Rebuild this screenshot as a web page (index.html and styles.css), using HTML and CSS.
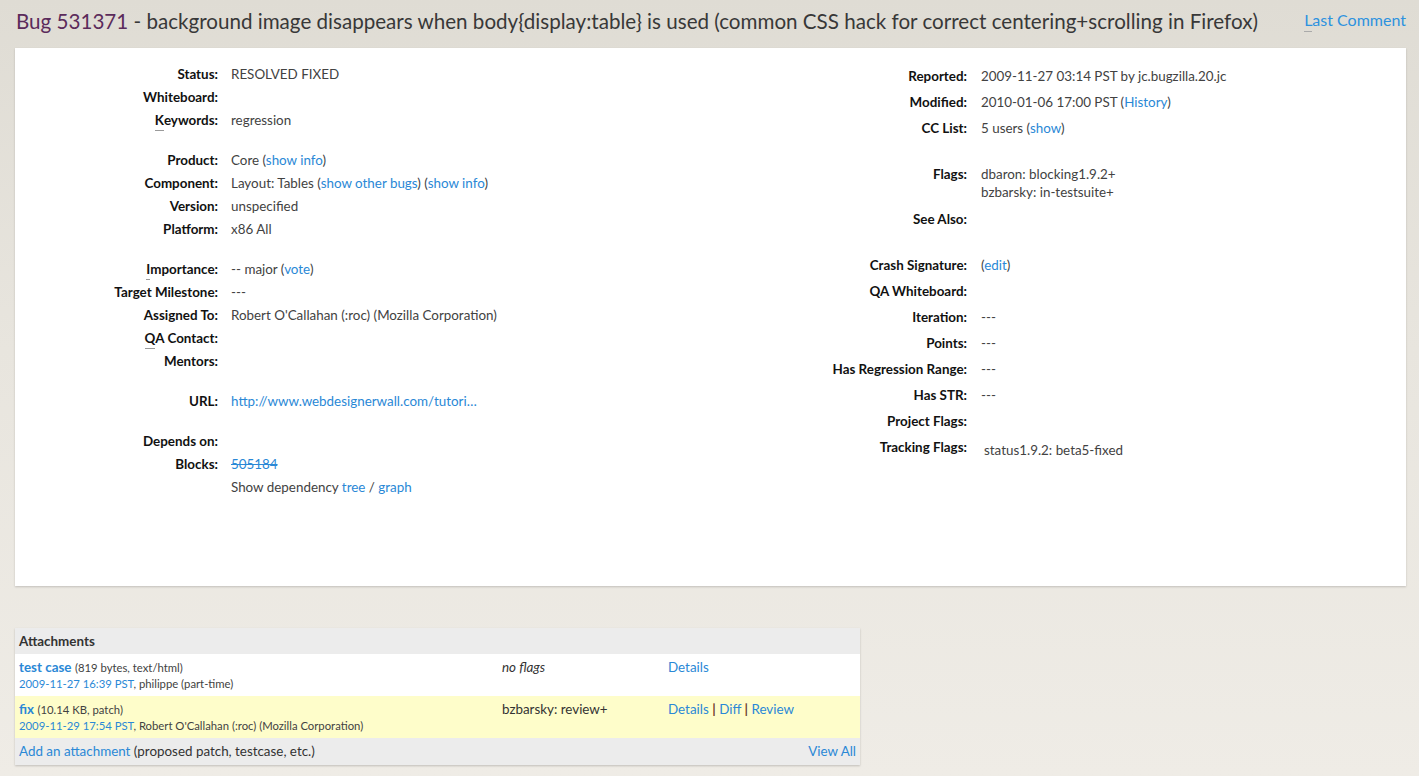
FILE: index.html
```html
<!DOCTYPE html>
<html>
<head>
<meta charset="utf-8">
<title>Bug 531371</title>
<link rel="stylesheet" href="styles.css">
</head>
<body>
<header class="title-bar">
  <h1 class="title"><a class="bug-id" href="#">Bug 531371</a> - background image disappears when body{display:table} is used (common CSS hack for correct centering+scrolling in Firefox)</h1>
  <a class="last-comment" href="#"><span class="k">L</span>ast Comment</a>
</header>

<section class="panel">
  <div class="col col-left">
    <div class="row"><div class="lbl">Status:</div><div class="val">RESOLVED FIXED</div></div>
    <div class="row"><div class="lbl">Whiteboard:</div><div class="val"></div></div>
    <div class="row"><div class="lbl"><span class="k">K</span>eywords:</div><div class="val">regression</div></div>
    <div class="spacer"></div>
    <div class="row"><div class="lbl">Product:</div><div class="val">Core (<a href="#">show info</a>)</div></div>
    <div class="row"><div class="lbl">Component:</div><div class="val">Layout: Tables (<a href="#">show other bugs</a>) (<a href="#">show info</a>)</div></div>
    <div class="row"><div class="lbl">Version:</div><div class="val">unspecified</div></div>
    <div class="row"><div class="lbl">Platform:</div><div class="val">x86 All</div></div>
    <div class="spacer"></div>
    <div class="row"><div class="lbl"><span class="k">I</span>mportance:</div><div class="val">-- major (<a href="#">vote</a>)</div></div>
    <div class="row"><div class="lbl">Target Milestone:</div><div class="val">---</div></div>
    <div class="row"><div class="lbl">Assigned To:</div><div class="val">Robert O'Callahan (:roc) (Mozilla Corporation)</div></div>
    <div class="row"><div class="lbl"><span class="k">Q</span>A Contact:</div><div class="val"></div></div>
    <div class="row"><div class="lbl">Mentors:</div><div class="val"></div></div>
    <div class="spacer"></div>
    <div class="row"><div class="lbl">URL:</div><div class="val"><a href="#">http://www.webdesignerwall.com/tutori…</a></div></div>
    <div class="spacer"></div>
    <div class="row"><div class="lbl">Depends on:</div><div class="val"></div></div>
    <div class="row"><div class="lbl">Blocks:</div><div class="val"><a class="closed" href="#">505184</a></div></div>
    <div class="row"><div class="lbl"></div><div class="val">Show dependency <a href="#">tree</a> / <a href="#">graph</a></div></div>
  </div>

  <div class="col col-right">
    <div class="row"><div class="lbl">Reported:</div><div class="val">2009-11-27 03:14 PST by jc.bugzilla.20.jc</div></div>
    <div class="row"><div class="lbl">Modified:</div><div class="val">2010-01-06 17:00 PST (<a href="#">History</a>)</div></div>
    <div class="row"><div class="lbl">CC List:</div><div class="val">5 users (<a href="#">show</a>)</div></div>
    <div class="spacer"></div>
    <div class="row row-flags"><div class="lbl">Flags:</div><div class="val">dbaron: blocking1.9.2+<br>bzbarsky: in-testsuite+</div></div>
    <div class="row"><div class="lbl">See Also:</div><div class="val"></div></div>
    <div class="spacer"></div>
    <div class="row"><div class="lbl">Crash Signature:</div><div class="val">(<a href="#">edit</a>)</div></div>
    <div class="row"><div class="lbl">QA Whiteboard:</div><div class="val"></div></div>
    <div class="row"><div class="lbl">Iteration:</div><div class="val">---</div></div>
    <div class="row"><div class="lbl">Points:</div><div class="val">---</div></div>
    <div class="row"><div class="lbl">Has Regression Range:</div><div class="val">---</div></div>
    <div class="row"><div class="lbl">Has STR:</div><div class="val">---</div></div>
    <div class="row"><div class="lbl">Project Flags:</div><div class="val"></div></div>
    <div class="row"><div class="lbl">Tracking Flags:</div><div class="val val-track">status1.9.2: beta5-fixed</div></div>
  </div>
</section>

<section class="attachments">
  <div class="att-head">Attachments</div>
  <div class="att-row">
    <div class="att-main">
      <div class="att-line1"><a class="att-name" href="#">test case</a> <span class="att-meta">(819 bytes, text/html)</span></div>
      <div class="att-line2"><a href="#">2009-11-27 16:39 PST</a>, philippe (part-time)</div>
    </div>
    <div class="att-flags"><em>no flags</em></div>
    <div class="att-actions"><a href="#">Details</a></div>
  </div>
  <div class="att-row att-patch">
    <div class="att-main">
      <div class="att-line1"><a class="att-name" href="#">fix</a> <span class="att-meta">(10.14 KB, patch)</span></div>
      <div class="att-line2"><a href="#">2009-11-29 17:54 PST</a>, Robert O'Callahan (:roc) (Mozilla Corporation)</div>
    </div>
    <div class="att-flags">bzbarsky: review+</div>
    <div class="att-actions"><a href="#">Details</a> <span class="sep">|</span> <a href="#">Diff</a> <span class="sep">|</span> <a href="#">Review</a></div>
  </div>
  <div class="att-foot">
    <div><a href="#">Add an attachment</a> (proposed patch, testcase, etc.)</div>
    <a href="#">View All</a>
  </div>
</section>
</body>
</html>
```

FILE: styles.css
```css
html, body {
  margin: 0;
  padding: 0;
}

body {
  min-height: 776px;
  padding: 0 13px 0 15px;
  font-family: "Lato", "Open Sans", sans-serif;
  font-size: 13.4px;
  color: #424242;
  background: linear-gradient(180deg, #dfdcd4 0%, #e8e5de 45%, #efece6 100%);
  box-sizing: border-box;
}

a {
  color: #2a88d6;
  text-decoration: none;
}

.k {
  display: inline-block;
  line-height: 1;
  padding-bottom: 3px;
  border-bottom: 1px solid #9a9a9a;
}

.title-bar {
  height: 48px;
  display: flex;
  justify-content: space-between;
  align-items: flex-start;
}

.title {
  margin: 8px 0 0 1px;
  font-size: 20.6px;
  font-weight: normal;
  line-height: 26px;
  color: #383838;
  white-space: nowrap;
}

.title .bug-id {
  color: #5b2b5b;
}

.last-comment {
  margin-top: 9px;
  font-size: 16px;
  line-height: 22px;
  color: #2d92df;
}

.last-comment .k {
  border-bottom-color: #aaa;
}

.panel {
  display: flex;
  background: #fff;
  padding: 15px 0 87px 0;
  box-shadow: 0 1px 2px rgba(0, 0, 0, 0.18);
}

.col-left {
  width: 695px;
}

.col-right {
  flex: 1;
}

.row {
  display: grid;
  column-gap: 13px;
}

.col-left .row {
  grid-template-columns: 203px 1fr;
  line-height: 23px;
}

.col-right .row {
  grid-template-columns: 257px 1fr;
  column-gap: 14px;
  line-height: 26px;
}

.lbl {
  text-align: right;
  font-weight: bold;
  color: #111;
  white-space: nowrap;
}

.val {
  white-space: nowrap;
}

.col-left .spacer {
  height: 17px;
}

.col-right .spacer {
  height: 20px;
}

.col-right .row-flags {
  line-height: 18px;
  padding: 4px 0 5px;
}

.val-track {
  padding: 3px 0 0 3px;
}

.closed {
  text-decoration: line-through;
}

.attachments {
  width: 845px;
  margin-top: 42px;
  box-shadow: 0 1px 2px rgba(0, 0, 0, 0.2);
}

.att-head {
  background: #ececec;
  height: 26px;
  line-height: 26px;
  padding: 0 4px;
  font-weight: bold;
  color: #333;
}

.att-row {
  display: grid;
  grid-template-columns: 483px 166px 1fr;
  padding: 5px 4px;
  background: #fff;
}

.att-row.att-patch {
  background: #fefdca;
}

.att-line1 {
  line-height: 17px;
}

.att-line2 {
  line-height: 15px;
  font-size: 11.3px;
}

.att-name {
  font-weight: bold;
}

.att-meta {
  font-size: 11.3px;
}

.att-flags,
.att-actions {
  line-height: 17px;
}

.att-flags {
  color: #333;
}

.sep {
  color: #6e3a2c;
  font-weight: bold;
}

.att-foot {
  display: flex;
  justify-content: space-between;
  background: #ececec;
  height: 27px;
  line-height: 27px;
  padding: 0 4px;
  color: #333;
}
```
